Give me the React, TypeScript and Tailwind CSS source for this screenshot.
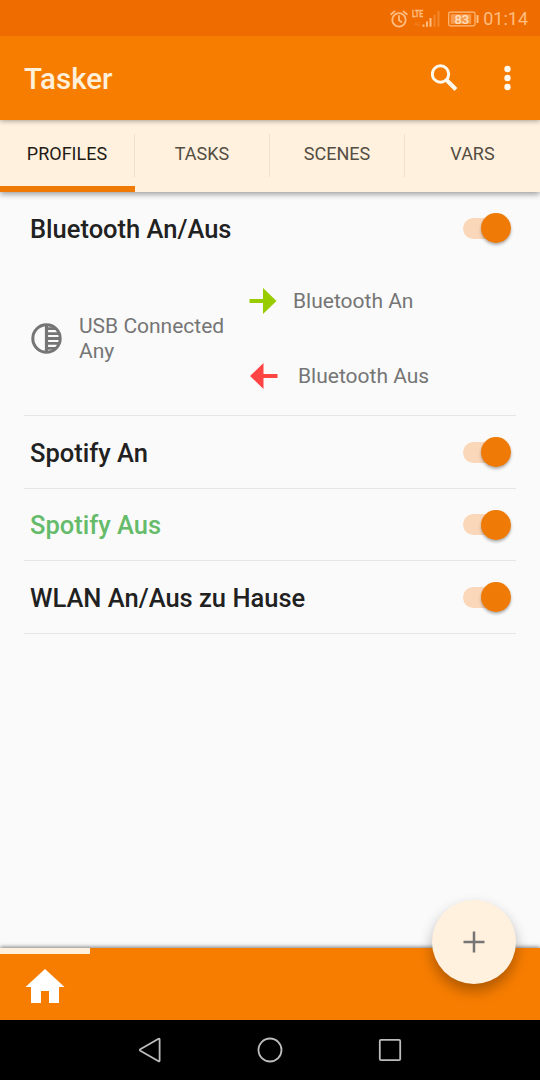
import React from 'react';

interface Profile {
    name: string;
    running?: boolean;
    height: string;
    expanded?: boolean;
}

const TABS = ['PROFILES', 'TASKS', 'SCENES', 'VARS'];

const PROFILES: Profile[] = [
    { name: 'Bluetooth An/Aus', height: 'h-[224px]', expanded: true },
    { name: 'Spotify An', height: 'h-[73px]' },
    { name: 'Spotify Aus', height: 'h-[72px]', running: true },
    { name: 'WLAN An/Aus zu Hause', height: 'h-[73px]' },
];

const StatusBar: React.FC = () => (
    <div className="relative z-30 h-9 bg-[#ef6c00] flex items-center justify-end pr-3 pt-px text-[#ffbd80]">
        <svg width="18" height="18" viewBox="0 0 18 18" fill="none" stroke="currentColor" strokeWidth="1.8" strokeLinecap="round">
            <circle cx="9" cy="9.9" r="6.7" />
            <path d="M9 6v4.2l2.4 1.8M1.2 4.2l3.3-2.8M16.8 4.2l-3.3-2.8" />
        </svg>
        <svg className="ml-1" width="29" height="20" viewBox="0 0 29 20" fill="currentColor">
            <text x="0" y="8.2" fontSize="9.5" fontWeight="700" stroke="currentColor" strokeWidth="0.3" textLength="11" lengthAdjust="spacingAndGlyphs">LTE</text>
            <path d="M10.5 15.5h2v2.3h-2zM14 12.5h2v5.3h-2zM17.5 9h2v8.8h-2z" />
            <path d="M21.5 5.8h2v12h-2zM25.5 2h2v15.8h-2z" opacity="0.35" />
            <text x="2" y="17.4" fontSize="5.5" opacity="0.35">4G</text>
        </svg>
        <svg className="ml-[7px]" width="31" height="16" viewBox="0 0 31 16">
            <rect x="0.7" y="1.2" width="26.3" height="13.6" rx="1.5" fill="none" stroke="currentColor" strokeWidth="1.2" />
            <rect x="2.7" y="3.2" width="20.5" height="9.6" fill="currentColor" opacity="0.6" />
            <rect x="28.5" y="4" width="2" height="8" rx="0.6" fill="currentColor" />
            <text x="13.8" y="12.8" textAnchor="middle" fontSize="13" fontWeight="500" fill="#ffe0c0">83</text>
        </svg>
        <span className="ml-1 text-[18px] leading-none">01:14</span>
    </div>
);

const Switch: React.FC = () => (
    <div className="w-12 h-[30px] flex items-center relative">
        <div className="w-9 h-[21px] rounded-full bg-[#fad7b8]" />
        <div className="absolute right-0 top-0 size-[30px] rounded-full bg-[#ef7a05] shadow-[0_2px_3px_rgba(0,0,0,0.3)]" />
    </div>
);

const ProfileBody: React.FC = () => (
    <div className="flex h-[151px] text-[21px] text-[#757575]">
        <div className="w-[225px] flex items-center pl-[7px] pb-0.5">
            <svg width="31" height="31" viewBox="0 0 31 31" fill="none" stroke="#757575">
                <circle cx="15.5" cy="15.5" r="13.7" strokeWidth="3" />
                <path d="M15.5 2v27" strokeWidth="3.2" />
                <path d="M16 5.7h9M16 10.6h12M16 15.5h13M16 20.4h12M16 25.3h9" strokeWidth="2.8" />
            </svg>
            <div className="ml-[17px] leading-[25px]">
                <p>USB Connected</p>
                <p>Any</p>
            </div>
        </div>
        <div className="flex flex-col">
            <div className="h-[75px] flex items-center">
                <svg className="mb-0.5" width="28" height="26" viewBox="0 0 28 26" fill="#99cc00">
                    <path d="M0.5 11H14V0l13.5 13L14 26V15H0.5z" />
                </svg>
                <span className="ml-4">Bluetooth An</span>
            </div>
            <div className="h-[75px] flex items-center">
                <svg className="ml-px mb-0.5" width="28" height="26" viewBox="0 0 28 26" fill="#ff4444">
                    <path d="M27.5 11h-14V0L0 13l13.5 13V15h14z" />
                </svg>
                <span className="ml-5">Bluetooth Aus</span>
            </div>
        </div>
    </div>
);

const ProfileRow: React.FC<{ profile: Profile }> = ({ profile }) => (
    <div className={`${profile.height} border-b border-[#e6e6e6]`}>
        <div className={`${profile.running ? 'h-[71px]' : 'h-[72px]'} flex items-center justify-between pl-1.5 pr-[5px]`}>
            <h2 className={`text-[25.5px] font-medium pt-[2px] ${profile.running ? 'text-[#66bb6a]' : 'text-[#212121]'}`}>
                {profile.name}
            </h2>
            <Switch />
        </div>
        {profile.expanded && <ProfileBody />}
    </div>
);

export default function App() {
    return (
        <div className="w-[540px] h-[1080px] flex flex-col bg-[#fafafa] overflow-hidden font-['Roboto',sans-serif]">
            <StatusBar />
            <header className="relative z-20 h-[84px] bg-[#f77d00] flex items-center pl-6 pr-[29px] shadow-[0_1px_5px_rgba(0,0,0,0.35)]">
                <h1 className="grow pt-0.5 text-[29.5px] font-medium text-[#fff0da]">Tasker</h1>
                <svg width="28" height="28" viewBox="0 0 28 28" fill="none" stroke="#fff8ec">
                    <circle cx="9.5" cy="10" r="8.2" strokeWidth="3" />
                    <path d="M15.5 16l9.5 9.5" strokeWidth="4" />
                </svg>
                <svg className="ml-[45px]" width="7" height="26" viewBox="0 0 7 26" fill="#fff8ec">
                    <circle cx="3.5" cy="4" r="3.2" />
                    <circle cx="3.5" cy="13" r="3.2" />
                    <circle cx="3.5" cy="22" r="3.2" />
                </svg>
            </header>
            <nav className="relative z-10 h-[72px] grid grid-cols-4 bg-[#fff1de] shadow-[0_2px_6px_rgba(0,0,0,0.4)]">
                {TABS.map((tab, i) => (
                    <div key={tab} className={`flex flex-col ${i === 0 ? 'text-[#1f1b15]' : 'text-[#544d43]'}`}>
                        <div className={`h-[43px] mt-[14px] pb-[5px] flex items-center justify-center text-[18px] ${i < 3 ? 'border-r border-[#eee0ce]' : ''}`}>
                            {tab}
                        </div>
                        {i === 0 && <div className="mt-auto h-1.5 bg-[#ef7a05]" />}
                    </div>
                ))}
            </nav>
            <main className="grow px-6">
                {PROFILES.map((profile) => (
                    <ProfileRow key={profile.name} profile={profile} />
                ))}
            </main>
            <footer className="relative h-[72px] bg-[#f77d00] shadow-[0_-1px_4px_rgba(0,0,0,0.5)]">
                <div className="w-[90px] h-1.5 bg-[#fff1de]" />
                <svg className="ml-[25px] mt-[15px]" width="40" height="34" viewBox="0 0 40 34" fill="#fff">
                    <path d="M20 0L39.5 18H34v16H24V22h-8v12H6V18H0.5z" />
                </svg>
                <button className="absolute right-6 -top-[48px] size-[84px] rounded-full bg-[#fff1de] flex items-center justify-center shadow-[0_7px_14px_rgba(0,0,0,0.3)]">
                    <svg width="22" height="22" viewBox="0 0 22 22" stroke="#757575" strokeWidth="2.5">
                        <path d="M11 0.5v21M0.5 11h21" />
                    </svg>
                </button>
            </footer>
            <div className="h-[60px] bg-black flex items-center justify-center gap-[95px]">
                <svg width="24" height="26" viewBox="0 0 24 26" fill="none" stroke="#bdbdbd" strokeWidth="1.8" strokeLinejoin="round">
                    <path d="M20.6 1.8Q21.6 1.3 21.6 2.4v21.2q0 1.1-1 .6L2.3 13.700q-1-.7 0-1.400z" />
                </svg>
                <svg width="26" height="26" viewBox="0 0 26 26" fill="none" stroke="#bdbdbd" strokeWidth="1.8">
                    <circle cx="13" cy="13" r="11.5" />
                </svg>
                <svg width="24" height="24" viewBox="0 0 24 24" fill="none" stroke="#bdbdbd" strokeWidth="1.8">
                    <rect x="1.8" y="1.8" width="20.4" height="20.4" rx="1.2" />
                </svg>
            </div>
        </div>
    );
}
